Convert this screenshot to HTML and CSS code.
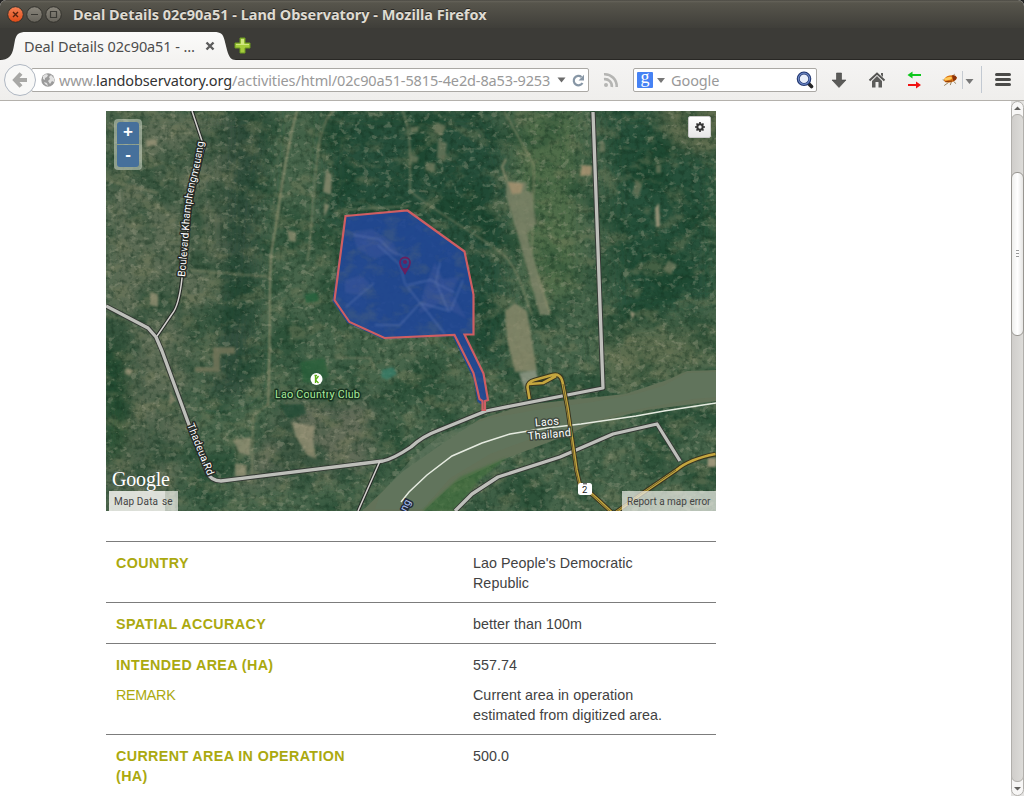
FILE: index.html
```html
<!DOCTYPE html>
<html lang="en">
<head>
<meta charset="utf-8">
<title>Deal Details 02c90a51 - Land Observatory</title>
<link rel="stylesheet" href="styles.css">
</head>
<body>
<div class="window">
  <header class="titlebar">
    <svg class="controls" width="62" height="28" viewBox="0 0 62 28">
      <defs>
        <linearGradient id="orange" x2="0" y2="1"><stop stop-color="#f58256"/><stop offset="1" stop-color="#df4a16"/></linearGradient>
        <linearGradient id="grey" x2="0" y2="1"><stop stop-color="#8a867c"/><stop offset="1" stop-color="#66635b"/></linearGradient>
      </defs>
      <g stroke="#32312c"><circle cx="15.500" cy="14.500" r="7.800" fill="url(#orange)"/><circle cx="34.500" cy="14.500" r="7.800" fill="url(#grey)"/><circle cx="53.500" cy="14.500" r="7.800" fill="url(#grey)"/></g>
      <path d="M13 12l5 5m0-5l-5 5" stroke="#56220e" stroke-width="1.400"/>
      <path d="M31 14.500h7M50.500 11.500h6v6h-6z" fill="none" stroke="#3a3934" stroke-width="1.200"/>
    </svg>
    <span class="window-title">Deal Details 02c90a51 - Land Observatory - Mozilla Firefox</span>
  </header>

  <div class="tabstrip">
    <div class="tab">
      <svg class="tab-shape" width="236" height="32" viewBox="0 0 236 32"><defs><linearGradient id="tabg" x2="0" y2="1"><stop stop-color="#fbfbfa"/><stop offset="1" stop-color="#f4f3f1"/></linearGradient></defs><path d="M0 32C8 32 12 28 13.500 20L15 12C16.500 6 19 4 26 4H214C221 4 223 6 224.500 12L227 22C229 29 231 32 236 32Z" fill="url(#tabg)"/></svg>
      <span class="tab-label">Deal Details 02c90a51 - …</span>
      <svg class="tab-close" width="10" height="10" viewBox="0 0 10 10"><path d="M1.500 1.500l7 7m0-7l-7 7" stroke="#5c5c5c" stroke-width="2.400"/></svg>
    </div>
    <svg class="new-tab" width="17" height="17" viewBox="0 0 17 17"><path d="M6 1h5v5h5v5h-5v5H6v-5H1V6h5z" fill="#a5cc3c" stroke="#6c9a22"/><path d="M7 2h3v5h5v1H2V7h5z" fill="#cfe780"/></svg>
  </div>

  <nav class="toolbar">
    <svg class="back" width="34" height="34" viewBox="0 0 34 34"><circle cx="17" cy="17" r="15.500" fill="#f8f8f7" stroke="#afb7c2"/><path d="M18 10.500L12 17l6 6.500M12.500 17H24" fill="none" stroke="#a8a8a6" stroke-width="4"/></svg>
    <div class="urlbar">
      <svg class="globe" width="14" height="14" viewBox="0 0 14 14"><circle cx="7" cy="7" r="6.700" fill="#9b9b9b"/><path d="M2 3l3-2 2 1-1 2-2 1v2L2 6zM8 4l2-2 3 3v4l-2-1-2 3-2-3 2-2zM3 9l3 1 1 3-3-2z" fill="#e2e2e2"/></svg>
      <span class="url">www.<b>landobservatory.org</b>/activities/html/02c90a51-5815-4e2d-8a53-9253</span>
      <svg class="drop" width="9" height="6" viewBox="0 0 9 6"><path d="M.5.500h8L4.500 5.500z" fill="#6b6b6b"/></svg>
      <svg class="reload" width="13" height="13" viewBox="0 0 13 13"><path d="M9.500 3A4.700 4.700 0 1 0 10.500 9" fill="none" stroke="#8796a5" stroke-width="2.200"/><path d="M12 .8V6.500H6.500z" fill="#8796a5"/></svg>
    </div>
    <svg class="rss" width="16" height="16" viewBox="0 0 16 16"><circle cx="3" cy="13" r="2" fill="#b5b5b3"/><path d="M1 7.200A7 7 0 0 1 8.800 15M1 2.300A12 12 0 0 1 13.700 15" fill="none" stroke="#b5b5b3" stroke-width="2.600"/></svg>
    <div class="searchbar">
      <span class="engine">g</span>
      <svg class="engine-drop" width="8" height="5" viewBox="0 0 8 5"><path d="M0 0h8L4 5z" fill="#777"/></svg>
      <span class="placeholder">Google</span>
      <svg class="lens" width="18" height="18" viewBox="0 0 18 18"><path d="M13 13l2.500 2.500" stroke="#252525" stroke-width="3.600" stroke-linecap="round"/><circle cx="8" cy="7.800" r="5.800" fill="#e8eefa" stroke="#20366f" stroke-width="3"/><circle cx="8" cy="7.800" r="5.600" fill="none" stroke="#6b86c4" stroke-width="1.200"/></svg>
    </div>
    <svg class="actions" width="200" height="40" viewBox="817 60 200 40">
      <path d="M836.500 73h5v7h4.500l-7 7.500-7-7.500h4.500z" fill="#5b5b59" stroke="#454543" stroke-width=".6"/>
      <path d="M869.500 80.500l7.500-7 7.500 7" fill="none" stroke="#555553" stroke-width="2"/><path d="M881 73h2v4l-2-2zM872 81l5-5 5 5v6.500h-3.500V82h-3v5.500H872z" fill="#5d5d5b"/>
      <path d="M907.500 75l5-3.500v2.500h8.500v2h-8.500v2.500z" fill="#0dc71c"/><path d="M921 85l-5-3.500v2.500h-8v2h8v2.500z" fill="#f01212"/>
      <g transform="rotate(-14 950 80)"><path d="M943 78l3 2m-3 4l5-2m1 3l2-3m4 3l-2-3m0-5l3-1.500" stroke="#8a744f" stroke-width=".8" fill="none"/><ellipse cx="950.500" cy="79" rx="6.500" ry="3.400" fill="#dc7614"/><ellipse cx="948.500" cy="78.200" rx="4" ry="1.500" fill="#ffc95a"/><path d="M953 76q4 .500 4 3t-4 3z" fill="#8c330b"/><path d="M945 80.500l7 1" stroke="#8d3c0a"/></g>
      <path d="M962.500 71v18" stroke="#c6cbd1"/><path d="M965.500 79h8l-4 5z" fill="#777"/><path d="M981.500 66v27" stroke="#c2c9d2"/>
      <path d="M996.500 74.500h13m-13 5h13m-13 5h13" stroke="#4b4b49" stroke-width="3" stroke-linecap="round"/>
    </svg>
  </nav>

  <main class="viewport">
    <div class="page">
      <section class="map">
        <svg class="satellite" width="610" height="400" viewBox="106 111 610 400">
          <defs>
            <filter id="broad" x="0" y="0" width="100%" height="100%" color-interpolation-filters="sRGB"><feTurbulence type="fractalNoise" baseFrequency=".022 .027" numOctaves="5" seed="8"/><feColorMatrix values="0 0 0 0 .09  0 0 0 0 .26  0 0 0 0 .17  0 4 0 0 -1.700"/></filter>
            <filter id="fields" x="0" y="0" width="100%" height="100%" color-interpolation-filters="sRGB"><feTurbulence type="fractalNoise" baseFrequency=".045 .065" numOctaves="4" seed="21"/><feColorMatrix values="0 0 0 0 .48  0 0 0 0 .50  0 0 0 0 .37  4 0 0 0 -2"/></filter>
            <filter id="speck" x="0" y="0" width="100%" height="100%" color-interpolation-filters="sRGB"><feTurbulence type="fractalNoise" baseFrequency=".13 .17" numOctaves="3" seed="3"/><feColorMatrix values="0 0 0 0 .66  0 0 0 0 .66  0 0 0 0 .56  0 0 7 0 -4.200"/></filter>
            <filter id="fine" x="0" y="0" width="100%" height="100%" color-interpolation-filters="sRGB"><feTurbulence type="fractalNoise" baseFrequency=".2" numOctaves="3" seed="5"/><feColorMatrix values="0 0 0 0 .06  0 0 0 0 .17  0 0 0 0 .10  0 3 0 0 -1.350"/></filter>
            <filter id="soft" x="-30%" y="-30%" width="160%" height="160%"><feGaussianBlur stdDeviation="9"/></filter>
            <filter id="edge"><feGaussianBlur stdDeviation=".8"/></filter>
            <clipPath id="deal"><path d="M345.500 216l62-5.500 57 41 9 43v40h-11l21 43 4 25-1.500 1-4 3-4-3-4-23-19-43-71 3-35-16-14-22z"/></clipPath>
          </defs>
          <rect x="106" y="111" width="610" height="400" fill="#47654b"/>
          <g filter="url(#soft)">
            <path d="M106 111h118v130l-30 120-20 150h-68z" fill="#5b6c55"/>
            <path d="M222 111h48l-10 120-10 160-42 10 14-110z" fill="#304f3d"/>
            <path d="M106 345h18l8 80-8 40h-18z" fill="#285033"/>
            <path d="M330 111h160l20 70-10 190-45-30-130-120z" fill="#26503a"/>
            <path d="M518 111h60v180l-40 10-20-80z" fill="#4f6d49"/>
            <path d="M605 111h111v190l-100 20z" fill="#28513a"/>
            <path d="M655 100h75v50l-50-5z" fill="#5e6c4d"/>
            <path d="M290 400h90l-10 70-140 20z" fill="#626c58"/>
            <path d="M600 330h116v30l-110 30z" fill="#5b6d50"/>
          </g>
          <rect x="106" y="111" width="610" height="400" filter="url(#broad)" opacity=".5"/>
          <rect x="106" y="111" width="610" height="400" filter="url(#fields)" opacity=".42"/>
          <rect x="106" y="111" width="610" height="400" filter="url(#fine)" opacity=".38"/>
          <rect x="106" y="111" width="610" height="400" filter="url(#speck)" opacity=".3"/>
          <g filter="url(#edge)" opacity=".8">
            <g fill="none" stroke="#9c9877" stroke-width="1.500">
              <path d="M297 111c-12 40-18 100-25 137-4 40-1 100-4 158" stroke-width="1.800"/>
              <path d="M332 111c-22 26-16 110-25 150M402 111c10 15 8 60 8 80 30 25 80 50 97 67 15 20 18 40 25 57M190 270l80 7M504 111l30 54-2 90 10 40M410 206l-65 4M106 180l52 13M268 405l-15 10-1 60M335 358h35l5 12" opacity=".75"/>
              <path d="M506 159l-4 8 16 45 32 102" stroke-width="2"/>
            </g>
            <path d="M506 181l21 1-1 9 6 1 4 32-9 10 22 81h-9l-21-75-13-44z" fill="#80856a"/>
            <path d="M508 182l15 2-2 9-9 1zM582 165l10 1-1 9-11 1z" fill="#b39977"/>
            <path d="M505 311l10-8 12 8 10 60-22 1-8-32z" fill="#8c8b6d"/>
            <path d="M519 373l17-3 2 10-14 8z" fill="#969d8a"/>
            <path d="M326 170l6 5-1 20-8-3zM324 203l6 2-6 12zM287 230l9 2v10l-7-1zM150 292l8 2v13l-8-2zM233 440l18-3-1 19-11-3zM291 422l24 4-2 13 3 20-9-4-11-18zM170 390l6 10-7 6zM235 463l12 2-1 12-11-1zM146 140l11-1v6l-10 2zM126 368l7 2-3 6-5-3z" fill="#a89d80" opacity=".8"/>
            <path d="M437 122l9 4-4 10-8-4zM438 140l9 3-2 18-8-3zM410 154l9 3-2 6-7-1zM410 127h8v5h-8zM636 180l6 5-3 12-7-3zM600 140l5 3v9h-6zM656 165h5v8h-5zM668 260l9 5-6 9-8-4zM425 162l10 1v9l-9-2z" fill="#7d8265" opacity=".8"/>
            <path d="M382 370l11-3 4 7-10 6-6-3z" fill="#397e69"/>
            <path d="M300 362l24-4 5 18-12 8-14-2z" fill="#2b613a"/>
            <path d="M280 405l24-1 2 10-18 5z" fill="#234c35"/>
            <path d="M305 294l12-1 2 8-13 2z" fill="#23613b"/>
            <path d="M195 367h18v-20h22v7h-15v18h-25z" fill="#77785b"/>
            <path d="M708 458h8v9h-9zM630 310l5 4-3 6zM655 208l4-5 1 24h-4z" fill="#b0a286"/>
          </g>
          <path d="M716 370l-29 1-20 9-27 9-15 5-57 6-43 5-45 14-38 25-40 28-20 20-20 19h62l29-27 52-25 52-20 42-18 48-11 69-9z" fill="#637259"/>
          <path d="M716 372l-29 1-24 13-27 8-43 8-57 8-45 8-47 15-30 23-34 39-5 14h48l27-31 40-24 43-16 45-11 40-14 75-14 23-2z" fill="#61765f" opacity=".6"/>
          <path d="M422 511l38-34 48-20-30 24-23 30z" fill="#42713e" opacity=".65" filter="url(#edge)"/>
          <path d="M401 502l8-10 18-17 25-19 30-13 28-9 37-6 34-4 55-8 28-5 52-8" fill="none" stroke="#e6ebe0" stroke-width="1.500"/>

          <g fill="none" stroke-linejoin="round">
            <g stroke="#343934" stroke-width="5.200">
              <path d="M106 306l42 22 8 9 6 14 26 71 19 50q4 9 14 9l162-20q10-2 28-14 12-11 26-16l49-20 117-23-10-276"/>
              <path d="M455 511l17-17 26-17 62-20 53-23 44-10 23 37"/>
            </g>
            <path d="M192 111l12 36c-6 28-14 48-16 83l-6 48q-3 28-10 36-6 9-15 22M380 461l-22 50" stroke="#262b27" stroke-width="3.600"/>
            <g stroke="#bebfba" stroke-width="3.300">
              <path d="M106 306l42 22 8 9 6 14 26 71 19 50q4 9 14 9l162-20q10-2 28-14 12-11 26-16l49-20 117-23-10-276"/>
              <path d="M455 511l17-17 26-17 62-20 53-23 44-10 23 37"/>
            </g>
            <path d="M192 111l12 36c-6 28-14 48-16 83l-6 48q-3 28-10 36-6 9-15 22M380 461l-22 50" stroke="#d2d0cc" stroke-width="1.500"/>
            <g id="highway">
              <path d="M529.500 399l-2-12q0-5 7-7l18-5q8-2 10 7l5 26 9 62 3 13 20 18 14 13 25-18 38-26q13-11 39-16M529 384l14-1 13-7" stroke="#393520" stroke-width="4.600"/>
              <path d="M529.500 399l-2-12q0-5 7-7l18-5q8-2 10 7l5 26 9 62 3 13 20 18 14 13 25-18 38-26q13-11 39-16M529 384l14-1 13-7" stroke="#c4a63f" stroke-width="2.600"/>
              <path d="M563 384l4 24 9 62 3 13 20 18 14 13 25-18 38-26" stroke="#554a26" stroke-width=".7"/>
            </g>
          </g>

          <path d="M345.500 216l62-5.500 57 41 9 43v40h-9l19 40 4 25.500-3 1-2 4-5-3-4-23-21-43-70 3-35-16-15-22z" fill="#214798" opacity=".9"/>
          <g clip-path="url(#deal)">
            <rect x="335" y="210" width="153" height="205" filter="url(#fields)" opacity=".16"/>
            <path d="M352 232l20-3 22 15 5 13-13-3-11 5-18-10zM345 280l16-5 9 9-10 11-15-2zM435 262l8 17 16-2-7 17 15 25-28-15-20 10 5-25z" fill="#6870ad" opacity=".2" filter="url(#edge)"/>
            <path d="M354 235l25 4 12 12 14 6M378 245l22 20 5 19 40 50M346 307l28-24M375 325l25 0 20-22 30 8M408 285l22-5 25 13M440 262l-4 20 12 28M463 280l-12 30" fill="none" stroke="#7f90c4" stroke-width="1.300" opacity=".4" filter="url(#edge)"/>
          </g>
          <path d="M345.500 216l62-5.500 57 41 9 43v40h-9l19 39 4.500 26.500-3 1v9h-2.500v-9l-3-2-6-26-19-38-70 3-35-16-15-22z" fill="none" stroke="#ce5e62" stroke-width="2.200"/>
          <path d="M405 273c-2-4-5-6-5-10.500a5 5 0 0 1 10 0c0 4.500-3 6.500-5 10.500z" fill="none" stroke="#672060" stroke-width="1.800"/><path d="M403 268l2 6 2-6z" fill="#672060"/><circle cx="405" cy="262" r="2" fill="#672060"/>

          <g class="map-text">
            <path id="boulevard" d="M185 277L189 230Q190 201 198 173Q202 157 204 139" fill="none"/>
            <text class="road-text" textLength="137"><textPath href="#boulevard">Boulevard Khamphengmeuang</textPath></text>
            <text class="road-text" transform="translate(187 425) rotate(68)" textLength="55">Thadeua Rd</text>
            <text class="club-text" x="275" y="398" textLength="85">Lao Country Club</text>
            <text class="border-text" x="535" y="425.500" textLength="24" transform="rotate(-5 547 423)">Laos</text>
            <text class="border-text" x="528" y="438" textLength="43" transform="rotate(-5 549 435)">Thailand</text>
            <text class="river-text" transform="translate(406 512) rotate(-64)">ng</text>
            <text class="google-text" x="112" y="486" textLength="58">Google</text>
          </g>
          <circle cx="316.500" cy="379" r="6" fill="#fff"/><path d="M314.500 375.500h2.500M315.500 376v7m0-3l3-4m-3 4l3 3" stroke="#5cad16" stroke-width="1.300" fill="none"/>
          <rect x="578" y="483" width="14" height="12" rx="2.500" fill="#fff"/><path d="M583 483.800h4" stroke="#333"/><text class="shield-text" x="582" y="493">2</text>
        </svg>
        <div class="zoom-control"><span>+</span><span>-</span></div>
        <div class="settings"><svg width="10" height="10" viewBox="0 0 10 10"><circle cx="5" cy="5" r="2.700" fill="none" stroke="#333" stroke-width="2"/><path d="M5 0v2m0 6v2M0 5h2m6 0h2M1.500 1.500l1.300 1.300m4.400 4.400l1.300 1.300m0-7L7.200 2.800M2.800 7.200L1.500 8.500" stroke="#333" stroke-width="1.700"/></svg></div>
        <div class="terms"><span class="map-data">Map Data</span><span class="use">se</span></div>
        <div class="report">Report a map error</div>
      </section>

      <dl class="details">
        <div class="row"><dt>COUNTRY</dt><dd>Lao People's Democratic Republic</dd></div>
        <div class="row"><dt>SPATIAL ACCURACY</dt><dd>better than 100m</dd></div>
        <div class="row"><dt>INTENDED AREA (HA)</dt><dd>557.74</dd><dt class="remark">REMARK</dt><dd>Current area in operation estimated from digitized area.</dd></div>
        <div class="row"><dt>CURRENT AREA IN OPERATION (HA)</dt><dd>500.0</dd></div>
      </dl>
    </div>
    <aside class="scrollbar">
      <svg width="13" height="695" viewBox="1011 101 13 695">
        <defs><linearGradient id="trough"><stop stop-color="#cfcdca"/><stop offset="1" stop-color="#dddcd9"/></linearGradient><linearGradient id="thumb"><stop stop-color="#ededeb"/><stop offset=".5" stop-color="#fff"/><stop offset="1" stop-color="#e4e3e1"/></linearGradient></defs>
        <rect x="1011" y="101" width="13" height="695" fill="#e4e3e1"/>
        <g stroke="#b1afab"><rect x="1011.500" y="101.500" width="12" height="694" rx="6" fill="#f7f6f5"/><rect x="1011.500" y="114.500" width="12" height="667" rx="5.500" fill="url(#trough)"/></g>
        <rect x="1011.500" y="172.500" width="12" height="163" rx="5.500" fill="url(#thumb)" stroke="#989691"/>
        <path d="M1016 250.500h3m-3 3h3m-3 3h3" stroke="#999"/><path d="M1014 110h7l-3.500-3.500zM1014 787h7l-3.500 3.500z" fill="#62615e"/>
      </svg>
    </aside>
  </main>
</div>
</body>
</html>
```

FILE: styles.css
```css
* { box-sizing: border-box; }
body { margin: 0; background: #fff; overflow: hidden; font-family: "Liberation Sans", Arial, sans-serif; }
svg { display: block; flex: none; }
.window { width: 1024px; height: 796px; display: flex; flex-direction: column; }

.titlebar { height: 28px; display: flex; background: linear-gradient(#3f3e39 0, #66635a 1px, #57554c 3px, #3f3e39 28px); border-radius: 6px 6px 0 0; box-shadow: 0 -4px 0 4px #222; clip-path: inset(0); }
.window-title { margin-left: 11px; font: bold 14.500px/29px "Noto Sans", sans-serif; letter-spacing: -.02px; color: #dfdbd2; text-shadow: 0 -1px #292824; white-space: nowrap; }

.tabstrip { height: 32px; display: flex; background: #3c3b37; border-bottom: 1px solid #282724; }
.tab { position: relative; width: 236px; height: 32px; display: flex; align-items: center; padding: 3px 20px 0 24px; justify-content: space-between; }
.tab-shape { position: absolute; left: 0; top: 0; }
.tab-label { position: relative; font: 14.500px/20px "Noto Sans", sans-serif; letter-spacing: -.1px; color: #4c4c4c; white-space: nowrap; }
.tab-close { position: relative; margin-right: 1px; }
.new-tab { margin: 9px 0 0 -2px; }

.toolbar { height: 41px; display: flex; align-items: center; background: linear-gradient(#f5f4f3, #efeeec); border-bottom: 1px solid #b4b1ac; }
.back { margin-left: 3px; z-index: 1; }
.urlbar { width: 558px; height: 24px; margin-left: -6px; padding-left: 9px; display: flex; align-items: center; background: #fff; border: 1px solid #aaa8a4; border-radius: 2px; }
.url { width: 493px; margin-left: 4px; overflow: hidden; font: 14.500px/22px "Noto Sans", sans-serif; letter-spacing: -.12px; color: #999; white-space: nowrap; }
.url b { font-weight: 400; color: #333; }
.drop { margin-left: 5px; }
.reload { margin-left: 6px; }
.rss { margin-left: 14px; }
.searchbar { width: 184px; height: 24px; margin-left: 14px; padding: 0 2px 0 3px; display: flex; align-items: center; background: #fff; border: 1px solid #aaa8a4; border-radius: 2px; }
.engine { width: 16px; height: 16px; background: #4682f4; border-radius: 1px; color: #fff; font: 18px/11px "Liberation Serif", serif; text-align: center; }
.engine-drop { margin: 1px 0 0 4px; }
.placeholder { flex: 1; margin-left: 6px; color: #999; font: 14.500px/22px "Noto Sans", sans-serif; letter-spacing: -.1px; }

.viewport { height: 695px; display: flex; justify-content: space-between; overflow: hidden; }
.page { width: 610px; margin: 10px 0 0 106px; }
.map { position: relative; width: 610px; height: 400px; overflow: hidden; }
.map-text { font-family: Roboto, sans-serif; paint-order: stroke; stroke-linejoin: round; }
.map-text text { paint-order: stroke; }
.road-text { font-size: 10.500px; fill: #fff; stroke: #272b27; stroke-width: 3px; }
.club-text { font-size: 11px; fill: #a9e99b; stroke: #183220; stroke-width: 3px; }
.border-text { font-size: 11px; fill: #fff; stroke: #414b40; stroke-width: 3px; }
.river-text { font-size: 10.500px; fill: #a9bff0; stroke: #222a38; stroke-width: 3px; }
.google-text { font: 20px "Liberation Serif", serif; fill: #fff; stroke: #4b5548; stroke-width: .6px; }
.shield-text { font: 9.500px Roboto, sans-serif; fill: #222; }
.zoom-control { position: absolute; left: 8px; top: 8px; width: 28px; height: 51px; padding: 3px; border-radius: 4px; background: rgba(207,217,201,.55); display: grid; grid-template-rows: 22px 22px; gap: 1px; }
.zoom-control span { background: #46709b; color: #fff; font: bold 17px/20px "Liberation Sans", sans-serif; text-align: center; border-radius: 3px 3px 0 0; }
.zoom-control span + span { border-radius: 0 0 3px 3px; }
.settings { position: absolute; left: 582px; top: 5px; width: 23px; height: 22px; display: grid; place-items: center; background: linear-gradient(#fff, #e7e7e7); border: 1px solid #c9c9c9; border-radius: 2px; }
.terms, .report { position: absolute; bottom: 0; height: 20px; display: flex; color: #444; background: rgba(235,237,230,.72); font: 10px/21px Roboto, sans-serif; letter-spacing: .15px; white-space: nowrap; }
.terms { left: 3px; width: 69px; }
.map-data { width: 56px; padding-left: 5px; background: rgba(240,240,237,.6); }
.use { margin-left: -3px; }
.report { right: 0; width: 94px; padding-left: 5px; letter-spacing: 0; }

.details { margin: 30px 0 0; font-size: 14.300px; line-height: 20px; color: #424242; letter-spacing: .05px; }
.row { display: grid; grid-template-columns: 357px 220px; row-gap: 10px; padding: 11px 10px 9px; border-top: 1px solid #7c7c7c; }
.details dt { max-width: 245px; color: #aba90f; font-weight: 700; letter-spacing: .38px; }
.details .remark { font-weight: 400; letter-spacing: -.3px; }
.details dd { margin: 0; max-width: 200px; }
.scrollbar { width: 13px; }
```
